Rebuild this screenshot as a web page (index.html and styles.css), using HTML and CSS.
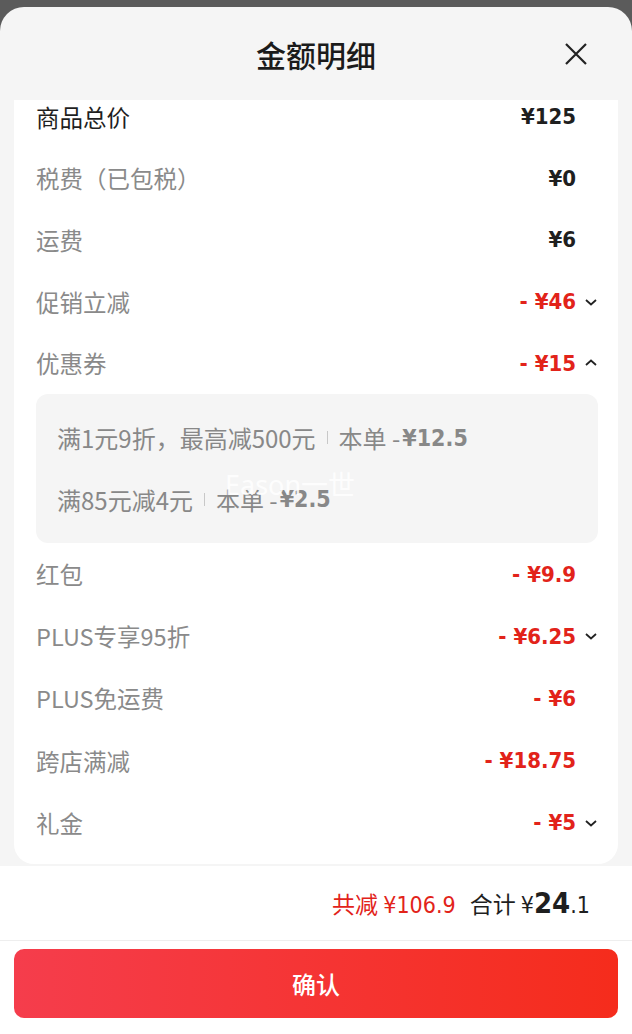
FILE: index.html
```html
<!DOCTYPE html>
<html lang="zh-CN">
<head>
    <meta charset="UTF-8">
    <meta name="viewport" content="width=device-width, initial-scale=1.0">
    <title>金额明细</title>
    <link rel="stylesheet" href="styles.css">
</head>
<body>
    <div class="sheet">
        <div class="sheet-header">
            <h1>金额明细</h1>
            <button class="close-btn" aria-label="关闭">
                <svg width="24" height="24" viewBox="0 0 24 24"><path d="M2 2 L22 22 M22 2 L2 22" stroke="#222" stroke-width="2.2" fill="none"/></svg>
            </button>
        </div>

        <div class="detail-card">
            <div class="detail-list">
                <div class="row main">
                    <span class="label">商品总价</span>
                    <span class="price">¥125</span>
                    <span class="arrow"></span>
                </div>
                <div class="row">
                    <span class="label">税费（已包税）</span>
                    <span class="price">¥0</span>
                    <span class="arrow"></span>
                </div>
                <div class="row">
                    <span class="label">运费</span>
                    <span class="price">¥6</span>
                    <span class="arrow"></span>
                </div>
                <div class="row">
                    <span class="label">促销立减</span>
                    <span class="price red">- ¥46</span>
                    <span class="arrow"><svg width="14" height="10" viewBox="0 0 14 10"><path d="M2 3 L7 7.5 L12 3" stroke="#222" stroke-width="1.8" fill="none"/></svg></span>
                </div>
                <div class="row">
                    <span class="label">优惠券</span>
                    <span class="price red">- ¥15</span>
                    <span class="arrow"><svg width="14" height="10" viewBox="0 0 14 10"><path d="M2 7 L7 2.5 L12 7" stroke="#222" stroke-width="1.8" fill="none"/></svg></span>
                </div>

                <div class="coupon-box">
                    <div class="coupon-line">满1元9折，最高减500元<i class="sep"></i>本单 -<b>¥12.5</b></div>
                    <div class="coupon-line">满85元减4元<i class="sep"></i>本单 -<b>¥2.5</b></div>
                </div>

                <div class="row">
                    <span class="label">红包</span>
                    <span class="price red">- ¥9.9</span>
                    <span class="arrow"></span>
                </div>
                <div class="row">
                    <span class="label">PLUS专享95折</span>
                    <span class="price red">- ¥6.25</span>
                    <span class="arrow"><svg width="14" height="10" viewBox="0 0 14 10"><path d="M2 3 L7 7.5 L12 3" stroke="#222" stroke-width="1.8" fill="none"/></svg></span>
                </div>
                <div class="row">
                    <span class="label">PLUS免运费</span>
                    <span class="price red">- ¥6</span>
                    <span class="arrow"></span>
                </div>
                <div class="row">
                    <span class="label">跨店满减</span>
                    <span class="price red">- ¥18.75</span>
                    <span class="arrow"></span>
                </div>
                <div class="row">
                    <span class="label">礼金</span>
                    <span class="price red">- ¥5</span>
                    <span class="arrow"><svg width="14" height="10" viewBox="0 0 14 10"><path d="M2 3 L7 7.5 L12 3" stroke="#222" stroke-width="1.8" fill="none"/></svg></span>
                </div>
            </div>
        </div>

        <div class="summary">
            <span class="saved">共减 <em>¥106.9</em></span>
            <span class="total">合计 <em>¥<strong>24</strong>.1</em></span>
        </div>

        <div class="actions">
            <button class="confirm-btn">确认</button>
        </div>
    </div>

    <div class="watermark">Eason一世</div>
</body>
</html>
```

FILE: styles.css
```css
body {
    margin: 0;
    background: #5b5b5b;
    font-family: "Noto Sans CJK SC", "Noto Sans", sans-serif;
    height: 1034px;
    overflow: hidden;
}
.sheet {
    margin-top: 7px;
    background: #f5f5f5;
    border-radius: 24px 24px 0 0;
    height: 1027px;
    display: flex;
    flex-direction: column;
    overflow: hidden;
}
.sheet-header {
    height: 93px;
    display: flex;
    align-items: center;
    justify-content: center;
    position: relative;
    flex-shrink: 0;
}
.sheet-header h1 {
    margin: 0;
    font-size: 30px;
    font-weight: 500;
    color: #1b1b1b;
}
.close-btn {
    position: absolute;
    right: 44px;
    top: 35px;
    border: 0;
    padding: 0;
    background: none;
    width: 24px;
    height: 24px;
}
.detail-card {
    margin: 0 14px;
    background: #fff;
    border-radius: 0 0 20px 20px;
    overflow: hidden;
    height: 764px;
    flex-shrink: 0;
}
.detail-list {
    margin-top: -14px;
}
.row {
    height: 61.6px;
    display: grid;
    grid-template-columns: 1fr auto 24px;
    align-items: center;
    padding: 0 15px 0 22px;
}
.coupon-box ~ .row {
    height: 62.2px;
}
.label {
    font-size: 23.5px;
    color: #8a8a8a;
}
.row.main .label {
    color: #1f1f1f;
}
.price {
    font-family: "DejaVu Sans Condensed", "DejaVu Sans", sans-serif;
    font-stretch: condensed;
    font-size: 22px;
    font-weight: 600;
    color: #1f1f1f;
    padding-right: 3px;
}
.price.red {
    color: #e2231a;
}
.arrow {
    display: flex;
    align-items: center;
    justify-content: center;
}
.coupon-box {
    margin: 0 20px 0 22px;
    background: #f5f5f5;
    border-radius: 12px;
    padding: 13px 0 13px 21px;
    height: 123px;
}
.coupon-line {
    height: 61.5px;
    display: flex;
    align-items: center;
    font-size: 24px;
    color: #888;
}
.coupon-line b {
    font-family: "DejaVu Sans Condensed", "DejaVu Sans", sans-serif;
    font-weight: 600;
    font-size: 23px;
    margin-left: 2px;
}
.sep {
    display: inline-block;
    width: 1px;
    height: 13px;
    background: #c8c8c8;
    margin: 0 11px;
}
.summary {
    margin-top: 2px;
    background: #fff;
    height: 74px;
    border-bottom: 1px solid #eeeeee;
    display: flex;
    justify-content: flex-end;
    align-items: center;
    padding-right: 42px;
    gap: 14px;
    flex-shrink: 0;
}
.summary em {
    font-style: normal;
    font-family: "DejaVu Sans Condensed", "DejaVu Sans", sans-serif;
}
.saved {
    font-size: 23px;
    color: #e2231a;
}
.total {
    font-size: 23px;
    color: #1f1f1f;
}
.total strong {
    font-size: 29px;
    font-weight: 700;
}
.actions {
    flex: 1;
    background: #fff;
    padding: 8px 14px 0;
}
.confirm-btn {
    width: 100%;
    height: 69px;
    border: 0;
    border-radius: 10px;
    background: linear-gradient(to right, #f53d4c, #f52c1c);
    color: #fff;
    font-family: "Noto Sans CJK SC", sans-serif;
    font-size: 24px;
    font-weight: 500;
}
.watermark {
    position: absolute;
    left: 225px;
    top: 464px;
    font-family: "Noto Sans", sans-serif;
    font-size: 27px;
    color: rgba(255, 255, 255, 0.85);
}
```
